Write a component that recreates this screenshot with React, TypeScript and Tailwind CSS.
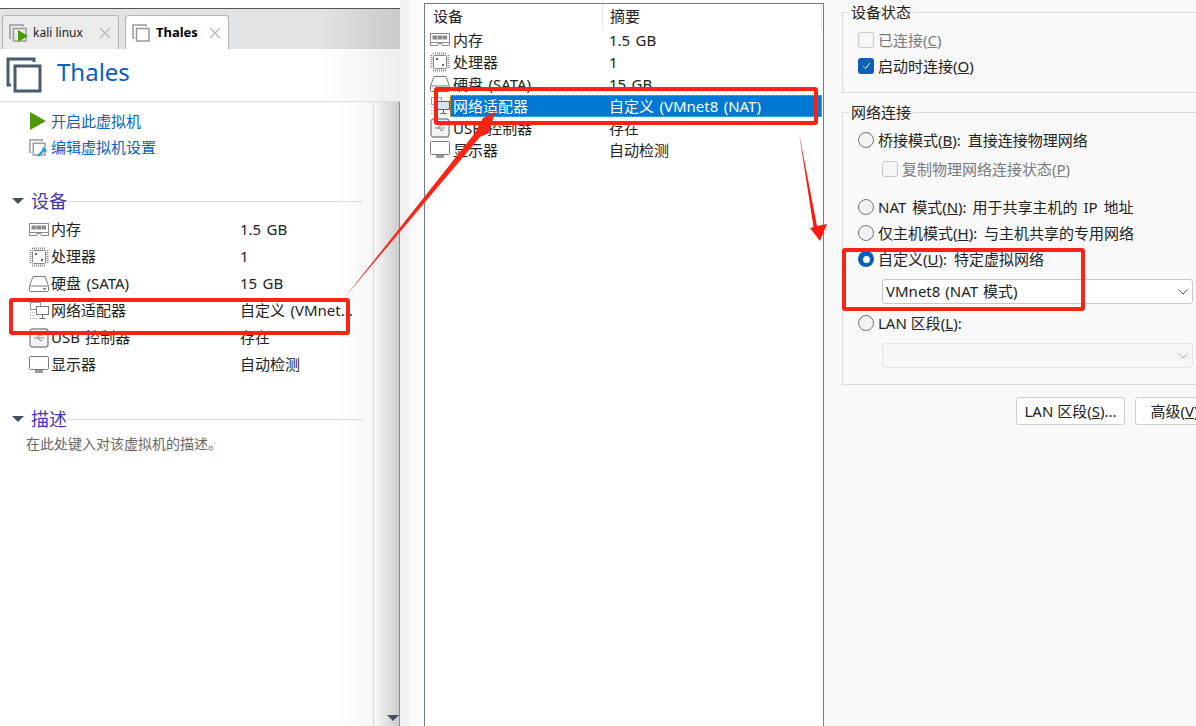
import React from 'react'

const fontStack = "font-['Noto_Sans','Noto_Sans_CJK_SC',sans-serif]"

function VmIcon({ size, color, strokeWidth }: { size: number; color: string; strokeWidth: number }) {
  return (
    <svg width={size} height={size} viewBox="0 0 36 36" fill="none" stroke={color} strokeWidth={strokeWidth}>
      <path d="M28 5V2H2V28H5" />
      <rect x="9" y="9" width="25" height="25" />
    </svg>
  )
}

function MemoryIcon() {
  const c = '#8a8a8a'
  return (
    <svg width="20" height="16" viewBox="0 0 20 16" fill="none" stroke={c}>
      <rect x="0.5" y="1.5" width="19" height="9" fill="#fff" />
      <rect x="3" y="4" width="3.5" height="3" fill={c} />
      <rect x="8" y="4" width="3.5" height="3" fill={c} />
      <rect x="13" y="4" width="3.5" height="3" fill={c} />
      <path d="M0.5 10.5V13.5H8V11.5H12V13.5H19.5V10.5" />
    </svg>
  )
}

function CpuIcon() {
  return (
    <svg width="20" height="20" viewBox="0 0 20 20" fill="none" stroke="#8a8a8a">
      <rect x="3.5" y="3.5" width="13" height="13" rx="1" />
      <path d="M3 1.5H17M3 18.5H17M1.5 3V17M18.5 3V17" strokeWidth="2" strokeDasharray="1 1" />
      <rect x="6" y="6" width="2" height="2" fill="#666" stroke="none" />
      <rect x="12" y="12" width="2" height="2" fill="#666" stroke="none" />
    </svg>
  )
}

function DiskIcon() {
  return (
    <svg width="20" height="16" viewBox="0 0 20 16" fill="none" stroke="#7a7a7a">
      <path d="M0.5 10L4 0.5H16L19.5 10" />
      <rect x="0.5" y="10" width="19" height="5.5" rx="1" />
      <rect x="14" y="12" width="3" height="1.5" fill="#7a7a7a" stroke="none" />
    </svg>
  )
}

function NetworkIcon({ selected }: { selected?: boolean }) {
  const back = selected ? '#6aa8dc' : '#9a9a9a'
  const front = selected ? '#0078d4' : '#7a7a7a'
  return (
    <svg width="20" height="20" viewBox="0 0 20 20" fill="none">
      <rect x="1.5" y="1.5" width="10" height="7" stroke={back} />
      <path d="M1 11.5H8M1 14.5H6M1 17.5H8" stroke="#b5b5b5" strokeDasharray="1 1" />
      <rect x="7.5" y="5.5" width="12" height="8" fill={selected ? '#cfe6f8' : '#fff'} stroke={front} />
      <path d="M13.5 13.5V17M10.5 17.5H16.5" stroke={front} />
    </svg>
  )
}

function UsbIcon() {
  return (
    <svg width="20" height="20" viewBox="0 0 20 20" fill="none" stroke="#8a8a8a">
      <rect x="1" y="1" width="18" height="18" rx="2.5" fill="#f4f4f4" strokeWidth="1.4" />
      <path d="M5 10H15M8 10L10.5 7H13M9 10L11 12.5H13" />
    </svg>
  )
}

function DisplayIcon() {
  return (
    <svg width="20" height="18" viewBox="0 0 20 18" fill="none" stroke="#7a7a7a">
      <rect x="0.5" y="0.5" width="19" height="13" rx="1" />
      <path d="M6 15.5H14" strokeWidth="3" stroke="#9a9a9a" />
    </svg>
  )
}

const devices = [
  { icon: <MemoryIcon />, label: '内存', value: '1.5 GB', full: '1.5 GB' },
  { icon: <CpuIcon />, label: '处理器', value: '1', full: '1' },
  { icon: <DiskIcon />, label: '硬盘 (SATA)', value: '15 GB', full: '15 GB' },
  { icon: <NetworkIcon />, label: '网络适配器', value: '自定义 (VMnet...', full: '自定义 (VMnet8 (NAT)' },
  { icon: <UsbIcon />, label: 'USB 控制器', value: '存在', full: '存在' },
  { icon: <DisplayIcon />, label: '显示器', value: '自动检测', full: '自动检测' },
]

function CloseMark() {
  return (
    <svg width="12" height="12" viewBox="0 0 12 12" stroke="#b9b9b9" strokeWidth="1.3">
      <path d="M1 1L11 11M11 1L1 11" />
    </svg>
  )
}

function Tabs() {
  return (
    <div className="flex h-[40px] items-end gap-[6px] bg-gradient-to-r from-[#e2e3e5] from-80% to-[#c9c9c9] pl-[2px]">
      <div className="flex h-[34px] w-[117px] items-center rounded-t-[4px] border border-b-0 border-[#b4b4b4] bg-[#ebebeb] pl-[6px]">
        <div className="relative">
          <VmIcon size={18} color="#999" strokeWidth={3} />
          <svg className="absolute left-[9px] top-[6px]" width="10" height="12" viewBox="0 0 10 12">
            <polygon points="0,0 10,6 0,12" fill="#4e9a06" />
          </svg>
        </div>
        <span className="ml-[6px] text-[12px] text-[#222]">kali linux</span>
        <span className="ml-[16px] flex">
          <CloseMark />
        </span>
      </div>
      <div className="flex h-[34px] w-[104px] items-center rounded-t-[4px] border border-b-0 border-[#b4b4b4] bg-white pl-[6px]">
        <VmIcon size={18} color="#999" strokeWidth={3} />
        <span className="ml-[6px] text-[13px] font-bold text-black">Thales</span>
        <span className="ml-[11px] flex">
          <CloseMark />
        </span>
      </div>
    </div>
  )
}

function SectionHeading({ title }: { title: string }) {
  return (
    <div className="flex h-[22px] items-center pl-[12px] pr-[10px]">
      <svg width="12" height="6" viewBox="0 0 12 6">
        <polygon points="0,0 12,0 6,6" fill="#44505c" />
      </svg>
      <span className="ml-[7px] text-[18px] text-[#4338b0]">{title}</span>
      <div className="ml-[1px] h-px flex-1 bg-[#dcdcdc]" />
    </div>
  )
}

function LeftPane() {
  return (
    <div className="flex w-[400px] shrink-0 flex-col">
      <div className="h-[9px] border-b border-[#555] bg-white" />
      <Tabs />
      <div className="flex h-[53px] items-center border-b border-[#dedede] bg-gradient-to-r from-white from-80% to-[#eeeeee] pl-[6px]">
        <VmIcon size={36} color="#4a5a68" strokeWidth={3} />
        <span className="-mt-[7px] ml-[15px] text-[24px] text-[#0a5fc4]">Thales</span>
      </div>
      <div className="flex flex-1">
        <div className="w-[373px] bg-gradient-to-r from-white from-90% to-[#f7f7f7] pt-[6px]">
          <div className="flex h-[26px] items-center pl-[30px] text-[#0a5fc4]">
            <svg width="16" height="18" viewBox="0 0 16 18">
              <polygon points="0,0 16,9 0,18" fill="#4e9a06" />
            </svg>
            <span className="ml-[5px]">开启此虚拟机</span>
          </div>
          <div className="flex h-[26px] items-center pl-[29px] text-[#0a5fc4]">
            <div className="relative">
              <VmIcon size={17} color="#999" strokeWidth={3} />
              <svg className="absolute left-[8px] top-[7px]" width="11" height="11" viewBox="0 0 11 11" fill="none" stroke="#1f9fd8" strokeWidth="2.4">
                <path d="M1 10L7 4M6.5 1.5A2.5 2.5 0 0 0 9.5 4.5" />
              </svg>
            </div>
            <span className="ml-[5px]">编辑虚拟机设置</span>
          </div>
          <div className="mt-[30px]">
            <SectionHeading title="设备" />
          </div>
          <div className="mt-[4px] [word-spacing:1.5px]">
            {devices.map(({ icon, label, value }, index) => (
              <div className="flex h-[27px] items-center pl-[28px]" key={index}>
                <span className="flex w-[21px] justify-center">{icon}</span>
                <span className="ml-[2px] w-[189px] text-[#222]">{label}</span>
                <span className="text-[#222]">{value}</span>
              </div>
            ))}
          </div>
          <div className="mt-[30px]">
            <SectionHeading title="描述" />
          </div>
          <div className="mt-[4px] pl-[26px] text-[14px] leading-[20px] text-[#666]">在此处键入对该虚拟机的描述。</div>
        </div>
        <div className="relative w-[27px] border-x border-l-[#d8d8d8] border-r-[#8a8a8a] bg-gradient-to-r from-[#f8f8f8] to-[#cdcdcd]">
          <svg className="absolute bottom-[5px] right-[0px]" width="12" height="6" viewBox="0 0 12 6">
            <polygon points="0,0 12,0 6,6" fill="#44505c" />
          </svg>
        </div>
      </div>
    </div>
  )
}

function DeviceList() {
  return (
    <div className="mt-[3px] flex w-[400px] shrink-0 flex-col border-x border-t border-[#737b86] bg-white text-[#222] [word-spacing:1.5px]">
      <div className="flex h-[25px] items-center">
        <span className="h-full w-[178px] border-r border-[#e4e4e4] pl-[8px] leading-[25px]">设备</span>
        <span className="h-full w-[219px] border-r border-[#e4e4e4] pl-[7px] leading-[25px]">摘要</span>
      </div>
      {devices.map(({ icon, label, full }, index) => {
        const selected = index === 3
        return (
          <div className="flex h-[22px] items-center pl-[5px]" key={index}>
            <span className="flex w-[20px] justify-center">{selected ? <NetworkIcon selected /> : icon}</span>
            <div className={`flex h-full w-[372px] items-center ${selected ? 'bg-[#0078d4] text-white outline-1 -outline-offset-1 outline-dotted outline-[#e8a050]' : ''}`}>
              <span className="w-[160px] pl-[3px]">{label}</span>
              <span className="-ml-px">{full}</span>
            </div>
          </div>
        )
      })}
    </div>
  )
}

function CheckBox({ checked, disabled }: { checked?: boolean; disabled?: boolean }) {
  if (checked) {
    return (
      <span className="flex h-[16px] w-[16px] items-center justify-center rounded-[3px] bg-[#0a5fb8]">
        <svg width="9" height="8" viewBox="0 0 9 8" fill="none" stroke="#fff">
          <path d="M1 4L3.5 6.5L8 1" />
        </svg>
      </span>
    )
  }
  return <span className={`h-[16px] w-[16px] rounded-[3px] border ${disabled ? 'border-[#c8c8c8] bg-[#f6f6f6]' : 'border-[#888]'}`} />
}

function Radio({ checked }: { checked?: boolean }) {
  if (checked) {
    return (
      <span className="flex h-[16px] w-[16px] items-center justify-center rounded-full bg-[#0a5fb8]">
        <span className="h-[7px] w-[7px] rounded-full bg-white" />
      </span>
    )
  }
  return <span className="h-[16px] w-[16px] rounded-full border border-[#777] bg-[#f3f3f3]" />
}

function OptionRow({ control, children, className }: { control: React.ReactNode; children: React.ReactNode; className?: string }) {
  return (
    <div className={`flex h-[26px] items-center gap-[4px] ${className ?? 'pl-[15px]'}`}>
      {control}
      <span className="whitespace-nowrap">{children}</span>
    </div>
  )
}

function Select({ value, disabled }: { value?: string; disabled?: boolean }) {
  return (
    <div className={`ml-[39px] flex h-[25px] w-[311px] items-center justify-between rounded-[3px] border pl-[3px] pr-[4px] [word-spacing:1px] ${disabled ? 'border-[#e4e4e4] bg-[#f7f7f7]' : 'border-[#c8c8c8] bg-white'}`}>
      <span>{value}</span>
      <svg width="10" height="6" viewBox="0 0 10 6" fill="none" stroke={disabled ? '#bcbcbc' : '#555'}>
        <path d="M0.5 0.5L5 5L9.5 0.5" />
      </svg>
    </div>
  )
}

function GroupBox({ title, className, children }: { title: string; className: string; children: React.ReactNode }) {
  return (
    <fieldset className={`w-[400px] border border-[#dcdcdc] ${className}`}>
      <legend className="ml-[6px] px-[2px] leading-[20px] text-[#222]">{title}</legend>
      {children}
    </fieldset>
  )
}

function SettingsPanel() {
  return (
    <div className="min-w-0 flex-1 overflow-hidden bg-[#f9f9f9] pl-[18px] pt-[2px] text-[#222]">
      <GroupBox title="设备状态" className="h-[91px]">
        <div className="pt-[5px]">
          <OptionRow control={<CheckBox disabled />}>
            <span className="text-[#7a7a7a]">
              已连接(<u>C</u>)
            </span>
          </OptionRow>
          <OptionRow control={<CheckBox checked />}>
            启动时连接(<u>O</u>)
          </OptionRow>
        </div>
      </GroupBox>
      <GroupBox title="网络连接" className="mt-[9px] h-[283px]">
        <div className="pt-[5px]">
          <OptionRow control={<Radio />} className="pl-[15px] [word-spacing:3px]">
            桥接模式(<u>B</u>): 直接连接物理网络
          </OptionRow>
          <OptionRow control={<CheckBox disabled />} className="mt-[3px] pl-[39px]">
            <span className="text-[#7a7a7a]">
              复制物理网络连接状态(<u>P</u>)
            </span>
          </OptionRow>
          <OptionRow control={<Radio />} className="mt-[12px] pl-[15px] [word-spacing:2px]">
            NAT 模式(<u>N</u>): 用于共享主机的 IP 地址
          </OptionRow>
          <OptionRow control={<Radio />} className="pl-[15px] [word-spacing:3px]">
            仅主机模式(<u>H</u>): 与主机共享的专用网络
          </OptionRow>
          <OptionRow control={<Radio checked />} className="pl-[15px] [word-spacing:3px]">
            自定义(<u>U</u>): 特定虚拟网络
          </OptionRow>
          <div className="mt-[7px]">
            <Select value="VMnet8 (NAT 模式)" />
          </div>
          <OptionRow control={<Radio />} className="mt-[6px] pl-[15px]">
            LAN 区段(<u>L</u>):
          </OptionRow>
          <div className="mt-[7px]">
            <Select disabled />
          </div>
        </div>
      </GroupBox>
      <div className="ml-[174px] mt-[12px] flex gap-[10px]">
        <button className="h-[28px] w-[109px] shrink-0 rounded-[3px] border border-[#cfcfcf] bg-white">
          LAN 区段(<u>S</u>)...
        </button>
        <button className="h-[28px] w-[91px] shrink-0 rounded-[3px] border border-[#cfcfcf] bg-white">
          高级(<u>V</u>)...
        </button>
      </div>
    </div>
  )
}

function Annotations() {
  return (
    <>
      <div className="absolute left-[9px] top-[298px] h-[37px] w-[341px] rounded-[3px] border-[4px] border-[#fb2314]" />
      <div className="absolute left-[434px] top-[87px] h-[38px] w-[384px] rounded-[3px] border-[4px] border-[#fb2314]" />
      <div className="absolute left-[842px] top-[248px] h-[63px] w-[243px] rounded-[3px] border-[4px] border-[#fb2314]" />
      <svg className="pointer-events-none absolute left-0 top-0" width="1196" height="726" viewBox="0 0 1196 726">
        <polygon points="345,297 475,133 483,118 495,112 489,133 480,137" fill="#fb2314" />
        <polygon points="799,133 817,226 827,224 820,241 810,228 813.5,227" fill="#fb1a0e" />
      </svg>
    </>
  )
}

export default function App() {
  return (
    <div className={`relative flex h-[726px] w-[1196px] overflow-hidden bg-white text-[15px] ${fontStack}`}>
      <LeftPane />
      <div className="flex">
        <div className="w-[9px] bg-[#f1f1f1]" />
        <div className="w-[15px] bg-[#fafafa]" />
      </div>
      <DeviceList />
      <SettingsPanel />
      <Annotations />
    </div>
  )
}
